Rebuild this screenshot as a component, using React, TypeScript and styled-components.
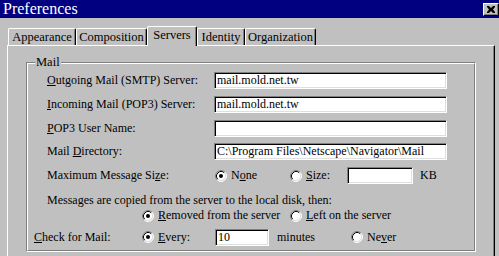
import React from 'react'
import styled, { createGlobalStyle } from 'styled-components'

const GlobalStyle = createGlobalStyle`
  html, body {
    margin: 0;
    padding: 0;
    background: #c0c0c0;
  }
  body {
    font-family: 'Liberation Serif', 'Times New Roman', serif;
    font-size: 12px;
    color: #000;
  }
`

const S = {
  Window: styled.div`
    width: 499px;
    height: 256px;
    overflow: hidden;
    background: #c0c0c0;
    display: flex;
    flex-direction: column;
  `,
  TitleBar: styled.div`
    height: 18px;
    flex: none;
    background: #000080;
    color: #fff;
    display: flex;
    align-items: center;
    padding-left: 3px;
    font-size: 16px;
    line-height: 18px;
  `,
  CloseButton: styled.div`
    margin-left: auto;
    margin-top: 1px;
    width: 16px;
    height: 13px;
    box-sizing: border-box;
    background: #c0c0c0;
    border-top: 1px solid #fff;
    border-left: 1px solid #fff;
    border-right: 1px solid #000;
    border-bottom: 1px solid #000;
    box-shadow: inset -1px -1px #808080;
    display: flex;
    align-items: center;
    justify-content: center;
  `,
  Body: styled.div`
    flex: 1;
    display: flex;
    flex-direction: column;
    padding: 8px 0 0 7px;
  `,
  TabStrip: styled.div`
    height: 19px;
    display: flex;
    align-items: flex-end;
    padding-left: 1px;
  `,
  Tab: styled.div<{ $w: number; $active?: boolean }>`
    position: relative;
    z-index: ${p => (p.$active ? 1 : 0)};
    width: ${p => p.$w}px;
    height: ${p => (p.$active ? 20 : 17)}px;
    margin-bottom: ${p => (p.$active ? -1 : 0)}px;
    box-sizing: border-box;
    background: #c0c0c0;
    border-top: 1px solid #fff;
    border-left: 1px solid #fff;
    border-right: 1px solid #000;
    border-top-left-radius: 2px;
    border-top-right-radius: 2px;
    box-shadow: inset -1px 0 #808080;
    display: flex;
    justify-content: center;
    align-items: ${p => (p.$active ? 'flex-start' : 'center')};
    padding-top: ${p => (p.$active ? 1 : 0)}px;
    font-size: 12.5px;
    line-height: 15px;
    white-space: nowrap;
  `,
  Panel: styled.div`
    flex: 1;
    width: 488px;
    box-sizing: border-box;
    border-top: 1px solid #fff;
    border-left: 1px solid #fff;
    border-right: 1px solid #000;
    box-shadow: inset -1px 0 #808080;
    padding: 16px 0 0 18px;
  `,
  GroupBox: styled.div`
    position: relative;
    width: 450px;
    box-sizing: border-box;
    border-top: 1px solid #808080;
    border-left: 1px solid #808080;
    border-right: 1px solid #fff;
    border-bottom: 1px solid #fff;
  `,
  GroupInner: styled.div`
    border-top: 1px solid #fff;
    border-left: 1px solid #fff;
    border-right: 1px solid #808080;
    border-bottom: 1px solid #808080;
    padding: 4px 0 2px 19px;
  `,
  Caption: styled.div`
    position: absolute;
    top: -8px;
    left: 8px;
    padding: 0 1px;
    background: #c0c0c0;
    font-size: 12.5px;
    line-height: 15px;
  `,
  Row: styled.div<{ $h: number; $mt?: number; $indent?: number }>`
    height: ${p => p.$h}px;
    margin-top: ${p => p.$mt || 0}px;
    margin-left: ${p => p.$indent || 0}px;
    display: flex;
    align-items: center;
    white-space: nowrap;
  `,
  Label: styled.span<{ $w: number }>`
    width: ${p => p.$w}px;
    flex: none;
  `,
  Cell: styled.div<{ $w: number; $pl?: number }>`
    width: ${p => p.$w}px;
    padding-left: ${p => p.$pl || 0}px;
    box-sizing: border-box;
    flex: none;
    display: flex;
    align-items: center;
  `,
  Field: styled.div<{ $w: number }>`
    width: ${p => p.$w}px;
    height: 17px;
    flex: none;
    box-sizing: border-box;
    background: #fff;
    border-top: 1px solid #808080;
    border-left: 1px solid #808080;
    border-right: 1px solid #fff;
    border-bottom: 1px solid #fff;
    box-shadow: inset 1px 1px #000, inset -1px -1px #dfdfdf;
    padding: 0 0 0 2px;
    line-height: 15px;
    overflow: hidden;
    white-space: nowrap;
  `,
  Option: styled.div`
    display: flex;
    align-items: center;
    gap: 4px;
  `,
  Unit: styled.span<{ $ml: number }>`
    margin-left: ${p => p.$ml}px;
  `
}

const Radio = ({ checked }: { checked?: boolean }) => (
  <svg width="12" height="12" viewBox="0 0 12 12" style={{ flex: 'none' }}>
    <circle cx="6" cy="6" r="5" fill="#fff" />
    <path d="M2.11 9.89 A5.5 5.5 0 0 1 9.89 2.11" fill="none" stroke="#808080" strokeWidth="1" />
    <path d="M9.89 2.11 A5.5 5.5 0 0 1 2.11 9.89" fill="none" stroke="#fff" strokeWidth="1" />
    <path d="M2.82 9.18 A4.5 4.5 0 0 1 9.18 2.82" fill="none" stroke="#000" strokeWidth="1" />
    <path d="M9.18 2.82 A4.5 4.5 0 0 1 2.82 9.18" fill="none" stroke="#dfdfdf" strokeWidth="1" />
    {checked && <circle cx="6" cy="6" r="2" fill="#000" />}
  </svg>
)

const CloseGlyph = () => (
  <svg width="8" height="7" viewBox="0 0 8 7">
    <path d="M0 0h2l2 2 2-2h2v1L6 3.5 8 6v1H6L4 5 2 7H0V6l2-2.5L0 1z" fill="#000" />
  </svg>
)

const RadioOption = ({ checked, children }: { checked?: boolean; children: React.ReactNode }) => (
  <S.Option>
    <Radio checked={checked} />
    <span>{children}</span>
  </S.Option>
)

const tabs = [
  { name: 'Appearance', w: 68 },
  { name: 'Composition', w: 71 },
  { name: 'Servers', w: 50, active: true },
  { name: 'Identity', w: 48 },
  { name: 'Organization', w: 71 }
]

export default function App() {
  return (
    <>
      <GlobalStyle />
      <S.Window>
        <S.TitleBar>
          Preferences
          <S.CloseButton><CloseGlyph /></S.CloseButton>
        </S.TitleBar>
        <S.Body>
          <S.TabStrip>
            {tabs.map(t => (
              <S.Tab key={t.name} $w={t.w} $active={t.active}>{t.name}</S.Tab>
            ))}
          </S.TabStrip>
          <S.Panel>
            <S.GroupBox>
              <S.Caption>Mail</S.Caption>
              <S.GroupInner>
                <S.Row $h={24}>
                  <S.Label $w={167}><u>O</u>utgoing Mail (SMTP) Server:</S.Label>
                  <S.Field $w={233}>mail.mold.net.tw</S.Field>
                </S.Row>
                <S.Row $h={24}>
                  <S.Label $w={167}><u>I</u>ncoming Mail (POP3) Server:</S.Label>
                  <S.Field $w={233}>mail.mold.net.tw</S.Field>
                </S.Row>
                <S.Row $h={24}>
                  <S.Label $w={167}><u>P</u>OP3 User Name:</S.Label>
                  <S.Field $w={233}></S.Field>
                </S.Row>
                <S.Row $h={23}>
                  <S.Label $w={167}>Mail <u>D</u>irectory:</S.Label>
                  <S.Field $w={233}>C:\Program Files\Netscape\Navigator\Mail</S.Field>
                </S.Row>
                <S.Row $h={25}>
                  <S.Label $w={167}>Maximum Message Si<u>z</u>e:</S.Label>
                  <S.Cell $w={76} $pl={1}>
                    <RadioOption checked>N<u>o</u>ne</RadioOption>
                  </S.Cell>
                  <S.Cell $w={57}>
                    <RadioOption><u>S</u>ize:</RadioOption>
                  </S.Cell>
                  <S.Field $w={66}></S.Field>
                  <S.Unit $ml={7}>KB</S.Unit>
                </S.Row>
                <S.Row $h={16} $mt={4}>
                  Messages are copied from the server to the local disk, then:
                </S.Row>
                <S.Row $h={15} $indent={95}>
                  <S.Cell $w={148}>
                    <RadioOption checked><u>R</u>emoved from the server</RadioOption>
                  </S.Cell>
                  <RadioOption><u>L</u>eft on the server</RadioOption>
                </S.Row>
                <S.Row $h={22} $mt={3} $indent={-13}>
                  <S.Label $w={108}><u>C</u>heck for Mail:</S.Label>
                  <S.Cell $w={73}>
                    <RadioOption checked><u>E</u>very:</RadioOption>
                  </S.Cell>
                  <S.Field $w={54}>10</S.Field>
                  <S.Cell $w={82} $pl={8}>minutes</S.Cell>
                  <RadioOption>Ne<u>v</u>er</RadioOption>
                </S.Row>
              </S.GroupInner>
            </S.GroupBox>
          </S.Panel>
        </S.Body>
      </S.Window>
    </>
  )
}
